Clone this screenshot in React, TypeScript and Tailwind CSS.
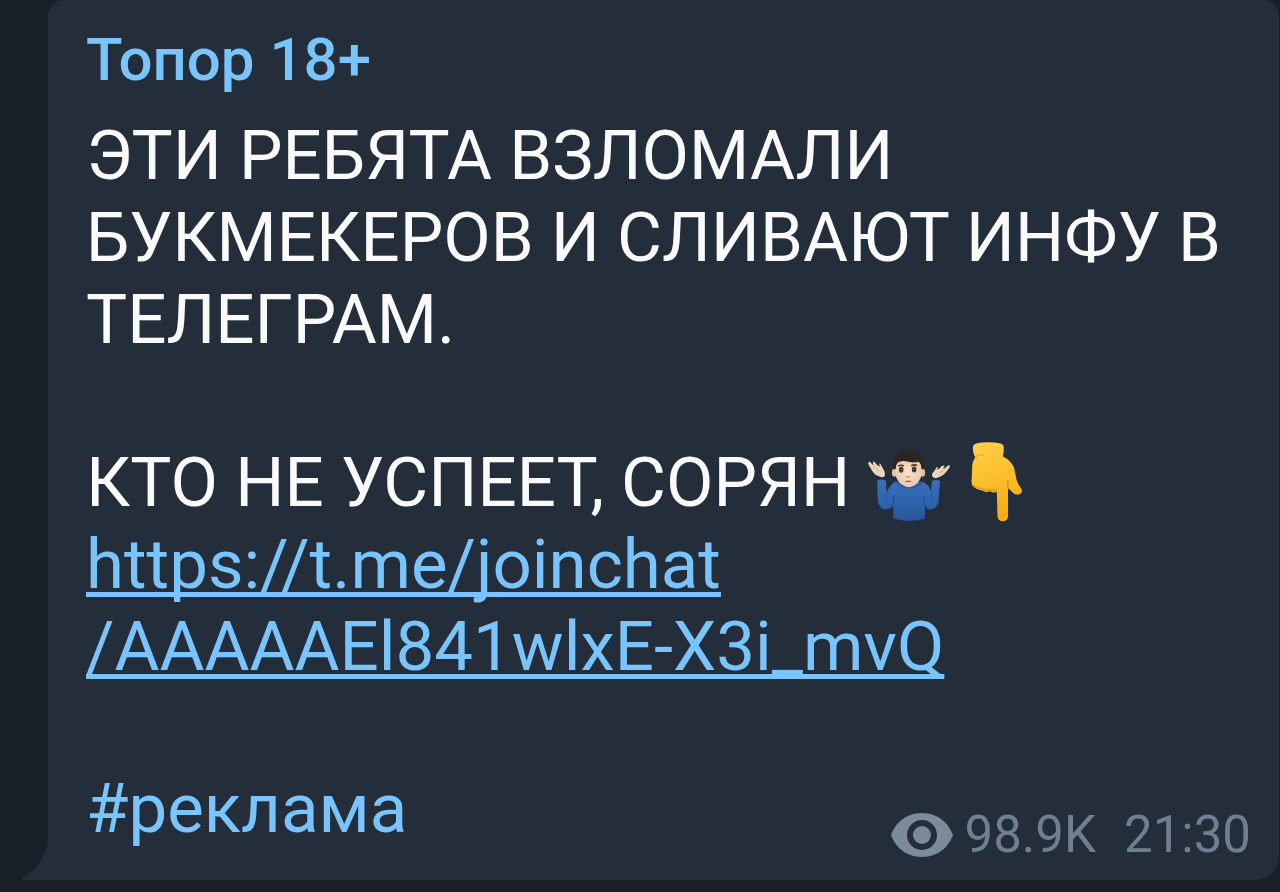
import React from 'react';

const ShrugEmoji: React.FC = () => (
  <svg
    viewBox="42 52 256 222"
    className="inline h-[74px] w-[85px] align-[-16px]"
    role="img"
    aria-label="Shrugging man"
  >
    <defs>
      <linearGradient id="shirt" x1="0" y1="0" x2="0" y2="1">
        <stop offset="0" stopColor="#3b6fb8" />
        <stop offset="0.5" stopColor="#2f66b0" />
        <stop offset="1" stopColor="#285596" />
      </linearGradient>
      <radialGradient id="face" cx="0.5" cy="0.5" r="0.6">
        <stop offset="0" stopColor="#fbe3cb" />
        <stop offset="1" stopColor="#e6c5a6" />
      </radialGradient>
    </defs>

    {/* Arms and body */}
    <path
      d="M73 148 Q86 144 99 151 L101 188 Q108 165 127 153 L210 153 Q229 162 235 182 L238 151 Q250 145 262 151 L257 216 Q251 240 225 236 L217 225 L216 264 Q170 279 122 264 L121 225 Q111 240 91 235 Q76 229 74 205 Z"
      fill="url(#shirt)"
    />
    <path d="M121 225 L123 194 M217 225 L213 194" stroke="#214d8d" strokeWidth="3" fill="none" />
    <path d="M101 188 L98 215 M235 182 L238 214" stroke="#285799" strokeWidth="3" fill="none" />
    <path d="M127 152 Q170 190 211 152" stroke="#275695" strokeWidth="4" fill="none" />

    {/* Hands */}
    <path
      d="M78 137 Q62 132 54 114 Q45 101 46 95 Q50 90 56 99 L62 104 Q57 93 63 92 L75 105 L81 107 Q76 96 82 99 L91 115 Q98 124 96 135 Q90 143 78 137 Z"
      fill="#eed4b9"
    />
    <path
      d="M254 141 Q270 137 280 124 Q292 111 292 105 Q287 101 280 110 L270 114 L276 106 Q270 101 260 113 L253 117 L256 109 Q251 107 246 119 Q236 128 238 137 Q245 145 254 141 Z"
      fill="#eed4b9"
    />
    <path d="M60 107 L78 121 M279 114 L261 127" stroke="#cda989" strokeWidth="3" />

    {/* Head */}
    <ellipse cx="124" cy="126" rx="7" ry="12" fill="#e3bf9e" />
    <ellipse cx="210" cy="126" rx="7" ry="12" fill="#e3bf9e" />
    <path
      d="M127 82 H207 V128 Q204 150 187 163 Q168 176 149 163 Q130 150 127 128 Z"
      fill="url(#face)"
    />
    <path
      d="M123 117 Q115 75 139 63 Q167 50 195 63 Q219 76 211 117 L206 113 Q205 97 197 93 Q182 97 166 93 Q146 88 134 96 Q129 101 129 113 Z"
      fill="#292522"
    />
    <path d="M136 106 Q144 101 153 106 M175 105 Q184 100 193 104" stroke="#4c382c" strokeWidth="5" fill="none" />
    <ellipse cx="145" cy="117" rx="7" ry="9" fill="#4a3a31" />
    <ellipse cx="184" cy="116" rx="7" ry="9" fill="#4a3a31" />
    <path d="M159 137 Q166 141 173 137" stroke="#c99878" strokeWidth="4" fill="none" />
    <path d="M155 152 Q166 147 178 151 Q167 158 155 152 Z" fill="#a45c4c" />
  </svg>
);

const PointDownEmoji: React.FC = () => (
  <svg
    viewBox="351 31 160 246"
    className="ml-[18px] inline h-[81px] w-[53px] align-[-16px]"
    role="img"
    aria-label="Pointing down"
  >
    <defs>
      <linearGradient id="hand" x1="0" y1="0" x2="0.3" y2="1">
        <stop offset="0" stopColor="#ffd04a" />
        <stop offset="0.5" stopColor="#fbc02d" />
        <stop offset="1" stopColor="#f5ad17" />
      </linearGradient>
    </defs>
    <path
      d="M360 46 Q362 36 404 35 Q447 35 452 45 Q455 61 450 77 Q475 90 484 111 L492 149 Q495 162 507 177 Q511 189 501 193 Q487 197 475 182 L466 174 L466 260 Q464 274 450 275 Q436 274 434 260 L432 185 Q421 191 411 183 Q399 189 388 181 Q370 180 359 168 Q353 160 356 141 L357 107 Q357 95 366 81 Q357 62 360 46 Z"
      fill="url(#hand)"
    />
    <path
      d="M358 164 Q370 176 388 176 Q398 185 411 178 Q422 185 433 178 M466 176 L465 151"
      stroke="#e39a12"
      strokeWidth="5"
      fill="none"
    />
    <path d="M367 81 Q375 73 393 73" stroke="#efac22" strokeWidth="4" fill="none" />
  </svg>
);

const EyeIcon: React.FC = () => (
  <svg viewBox="0 0 62 44" className="h-[44px] w-[62px]" aria-hidden="true">
    <path
      d="M31 0 C48 0 58 11 62 22 C58 33 48 44 31 44 C14 44 4 33 0 22 C4 11 14 0 31 0 Z M31 7 A15 15 0 1 0 31 37 A15 15 0 1 0 31 7 Z"
      fill="#7b8b9b"
      fillRule="evenodd"
    />
    <circle cx="31" cy="22" r="9" fill="#7b8b9b" />
  </svg>
);

const App: React.FC = () => {
  return (
    <main className="min-h-screen bg-[#171f28] pb-[13px] pl-12 pr-px font-['Roboto',sans-serif]">
      <article className="relative rounded-t-2xl rounded-br-3xl bg-[#232e3a] pb-[15px] pl-[38px] pr-7 pt-6">
        {/* Bubble tail */}
        <svg
          viewBox="0 0 26 42"
          className="absolute bottom-0 right-full h-[42px] w-[26px]"
          aria-hidden="true"
        >
          <path d="M26 0 C25 17 15 31 1 39 Q-1 41 2 42 H26 Z" fill="#232e3a" />
        </svg>

        <h1 className="text-[60px] font-medium leading-[72px] text-[#79c4fc]">Топор 18+</h1>

        <div className="mt-[19px] flex flex-col gap-20 text-[69px] leading-[82px] text-[#fafafa]">
          <p>ЭТИ РЕБЯТА ВЗЛОМАЛИ БУКМЕКЕРОВ И СЛИВАЮТ ИНФУ В ТЕЛЕГРАМ.</p>

          <p>
            КТО НЕ УСПЕЕТ, СОРЯН <ShrugEmoji />
            <PointDownEmoji />
            <br />
            <a
              href="https://t.me/joinchat/AAAAAEl841wlxE-X3i_mvQ"
              className="text-[#79c4fc] underline decoration-[5px] underline-offset-[4px] [text-decoration-skip-ink:none]"
            >
              https://t.me/joinchat
              <br />
              /AAAAAEl841wlxE-X3i_mvQ
            </a>
          </p>

          <footer className="flex items-end justify-between">
            <a href="#реклама" className="pb-[15px] text-[#79c4fc]">
              #реклама
            </a>
            <div className="flex items-center text-[51px] leading-[60px] text-[#6f7f8f]">
              <EyeIcon />
              <span className="ml-3">98.9K</span>
              <time className="ml-7">21:30</time>
            </div>
          </footer>
        </div>
      </article>
    </main>
  );
};

export default App;
